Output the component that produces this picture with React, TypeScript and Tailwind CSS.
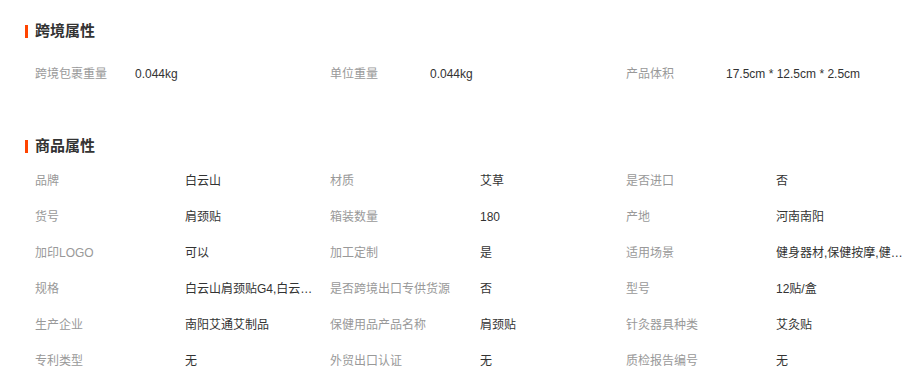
import React from 'react';

const crossBorder: [string, string][] = [
    ['跨境包裹重量', '0.044kg'],
    ['单位重量', '0.044kg'],
    ['产品体积', '17.5cm * 12.5cm * 2.5cm'],
];

const productAttrs: [string, string][] = [
    ['品牌', '白云山'],
    ['材质', '艾草'],
    ['是否进口', '否'],
    ['货号', '肩颈贴'],
    ['箱装数量', '180'],
    ['产地', '河南南阳'],
    ['加印LOGO', '可以'],
    ['加工定制', '是'],
    ['适用场景', '健身器材,保健按摩,健身器材,保健按摩'],
    ['规格', '白云山肩颈贴G4,白云山肩颈贴G5'],
    ['是否跨境出口专供货源', '否'],
    ['型号', '12贴/盒'],
    ['生产企业', '南阳艾通艾制品'],
    ['保健用品产品名称', '肩颈贴'],
    ['针灸器具种类', '艾灸贴'],
    ['专利类型', '无'],
    ['外贸出口认证', '无'],
    ['质检报告编号', '无'],
];

function SectionTitle({ title }: { title: string }) {
    return (
        <div className="flex items-center h-6 pl-[25px]">
            <span className="w-[3px] h-[13px] bg-[#ff4400] mr-[7px]"></span>
            <h3 className="text-[15px] font-bold text-[#333]">{title}</h3>
        </div>
    );
}

export default function App() {
    return (
        <div
            className="w-[920px] h-[388px] bg-white pt-[19px] overflow-hidden"
            style={{ fontFamily: '"Liberation Sans", "Noto Sans CJK SC", sans-serif' }}
        >
            {/* 跨境属性 */}
            <SectionTitle title="跨境属性" />
            <div className="grid grid-cols-[295px_296px_1fr] pl-[35px] mt-[13px] h-9 items-center text-xs">
                {crossBorder.map(([label, value]) => (
                    <div key={label} className="flex items-center">
                        <span className="w-[100px] text-[#999]">{label}</span>
                        <span className="text-[#333]">{value}</span>
                    </div>
                ))}
            </div>

            {/* 商品属性 */}
            <div className="mt-[42px]">
                <SectionTitle title="商品属性" />
            </div>
            <div className="grid grid-cols-[295px_296px_1fr] pl-[35px] mt-[5px] text-xs">
                {productAttrs.map(([label, value]) => (
                    <div key={label} className="flex items-center h-9">
                        <span className="w-[150px] shrink-0 text-[#999] whitespace-nowrap">{label}</span>
                        <span className="w-[136px] text-[#333] whitespace-nowrap overflow-hidden text-ellipsis">{value}</span>
                    </div>
                ))}
            </div>
        </div>
    );
}
